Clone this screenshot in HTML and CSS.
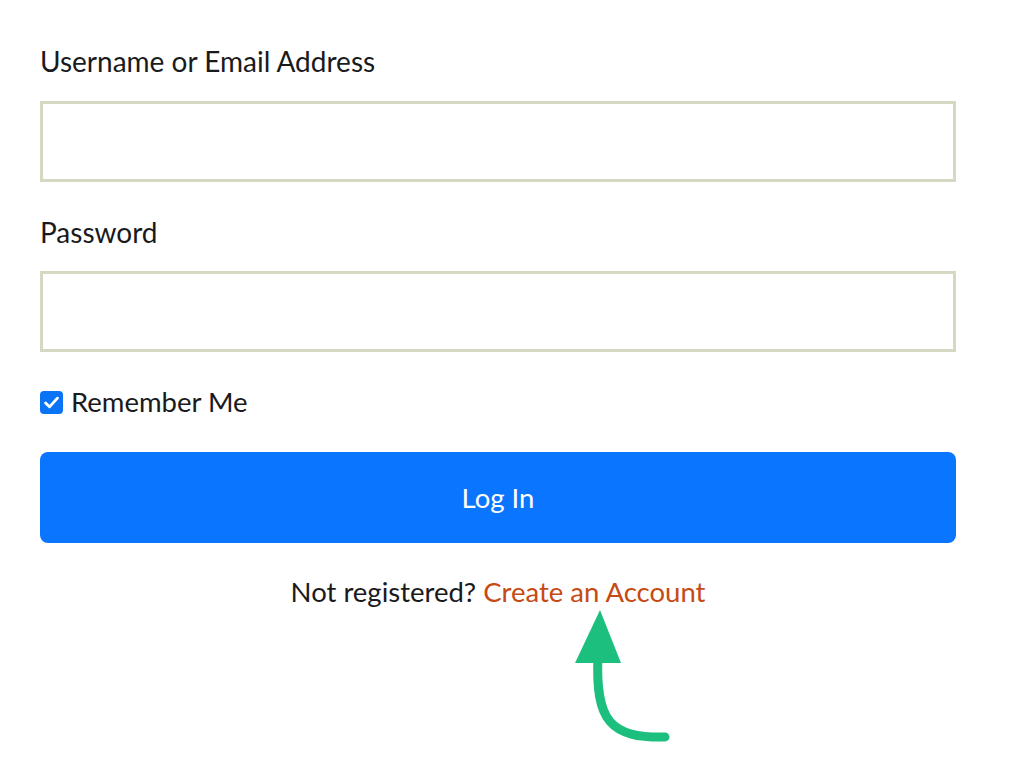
FILE: index.html
```html
<!DOCTYPE html>
<html>
<head>
<meta charset="utf-8">
<link rel="stylesheet" href="styles.css">
</head>
<body>
<form class="login">
  <label class="field-label" for="user">Username or Email Address</label>
  <input class="field-input" id="user" type="text">
  <label class="field-label pw" for="pass">Password</label>
  <input class="field-input" id="pass" type="password">
  <label class="remember">
    <span class="check"><svg viewBox="0 0 24 24" width="19" height="19"><path d="M4.5 12.5l5 5L19.5 6.5" fill="none" stroke="#fff" stroke-width="3.6" stroke-linecap="round" stroke-linejoin="round"/></svg></span>
    <span>Remember Me</span>
  </label>
  <button type="button" class="btn">Log In</button>
  <p class="register">Not registered? <a href="#">Create an Account</a></p>
  <div class="arrow-wrap">
    <svg class="arrow" width="100" height="135" viewBox="0 0 100 135">
      <path d="M23 46 C 20 112, 36 128, 90 127" fill="none" stroke="#1dbf7f" stroke-width="9" stroke-linecap="round"/>
      <polygon points="25,0 0,53 46,53" fill="#1dbf7f"/>
    </svg>
  </div>
</form>
</body>
</html>
```
FILE: styles.css
```css
html, body {
  margin: 0;
  padding: 0;
  background: #fff;
}
body {
  font-family: "Lato", "Noto Sans", sans-serif;
  color: #1a1a1c;
}
.login {
  width: 916px;
  padding: 43px 0 0 40px;
  display: flex;
  flex-direction: column;
}
.field-label {
  font-size: 28px;
  line-height: 36px;
  margin-bottom: 22px;
}
.field-label.pw {
  margin-top: 32px;
  margin-bottom: 21px;
}
.field-input {
  box-sizing: border-box;
  height: 81px;
  width: 916px;
  border: 3px solid #d5d8c2;
  border-radius: 0;
  background: #fff;
  margin: 0;
  outline: none;
}
.remember {
  margin-top: 37px;
  display: flex;
  align-items: center;
  gap: 8px;
  font-size: 27.5px;
  line-height: 26px;
}
.check {
  width: 23px;
  height: 23px;
  border-radius: 4px;
  background: #0b74f6;
  display: flex;
  align-items: center;
  justify-content: center;
}
.btn {
  margin-top: 37px;
  height: 91px;
  width: 916px;
  border: none;
  border-radius: 8px;
  background: #0a75fe;
  color: #fff;
  font-family: "Lato", "Noto Sans", sans-serif;
  font-size: 27.5px;
}
.register {
  margin: 34px 0 0;
  text-align: center;
  font-size: 27.5px;
  line-height: 30px;
}
.register a {
  color: #c64a14;
  text-decoration: none;
}
.arrow-wrap {
  display: flex;
  padding-left: 535px;
  margin-top: 3px;
}
```
